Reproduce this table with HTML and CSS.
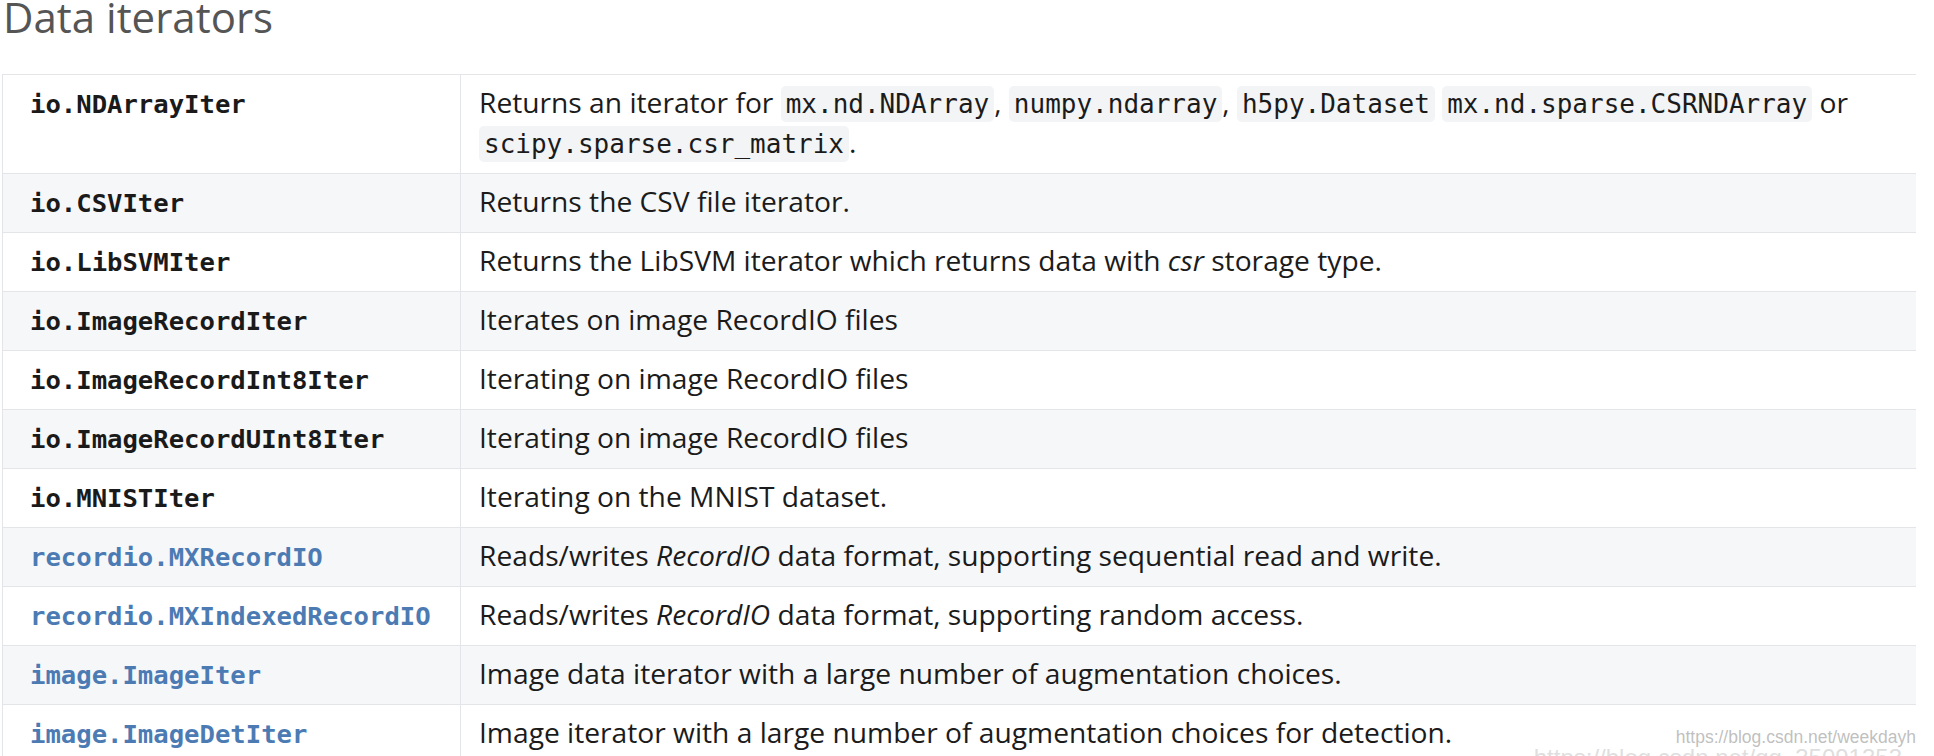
FILE: index.html
```html
<!DOCTYPE html>
<html lang="en">
<head>
<meta charset="utf-8">
<title>Data iterators</title>
<link rel="stylesheet" href="styles.css">
</head>
<body>
<main class="page">
  <h1 class="title">Data iterators</h1>
  <table class="summary">
    <colgroup><col class="col-name"><col class="col-desc"></colgroup>
    <tbody>
      <tr>
        <td class="name top"><code class="n">io.NDArrayIter</code></td>
        <td class="desc">Returns an iterator for <code class="c">mx.nd.NDArray</code>, <code class="c">numpy.ndarray</code>, <code class="c">h5py.Dataset</code> <code class="c">mx.nd.sparse.CSRNDArray</code> or <code class="c">scipy.sparse.csr_matrix</code>.</td>
      </tr>
      <tr>
        <td class="name"><code class="n">io.CSVIter</code></td>
        <td class="desc">Returns the CSV file iterator.</td>
      </tr>
      <tr>
        <td class="name"><code class="n">io.LibSVMIter</code></td>
        <td class="desc">Returns the LibSVM iterator which returns data with <em>csr</em> storage type.</td>
      </tr>
      <tr>
        <td class="name"><code class="n">io.ImageRecordIter</code></td>
        <td class="desc">Iterates on image RecordIO files</td>
      </tr>
      <tr>
        <td class="name"><code class="n">io.ImageRecordInt8Iter</code></td>
        <td class="desc">Iterating on image RecordIO files</td>
      </tr>
      <tr>
        <td class="name"><code class="n">io.ImageRecordUInt8Iter</code></td>
        <td class="desc">Iterating on image RecordIO files</td>
      </tr>
      <tr>
        <td class="name"><code class="n">io.MNISTIter</code></td>
        <td class="desc">Iterating on the MNIST dataset.</td>
      </tr>
      <tr>
        <td class="name"><a class="link" href="#"><code class="n">recordio.MXRecordIO</code></a></td>
        <td class="desc">Reads/writes <em>RecordIO</em> data format, supporting sequential read and write.</td>
      </tr>
      <tr>
        <td class="name"><a class="link" href="#"><code class="n">recordio.MXIndexedRecordIO</code></a></td>
        <td class="desc">Reads/writes <em>RecordIO</em> data format, supporting random access.</td>
      </tr>
      <tr>
        <td class="name"><a class="link" href="#"><code class="n">image.ImageIter</code></a></td>
        <td class="desc">Image data iterator with a large number of augmentation choices.</td>
      </tr>
      <tr>
        <td class="name"><a class="link" href="#"><code class="n">image.ImageDetIter</code></a></td>
        <td class="desc">Image iterator with a large number of augmentation choices for detection.</td>
      </tr>
    </tbody>
  </table>
</main>
<div class="watermark">
  <span class="wm1">https://blog.csdn.net/weekdayh</span>
  <span class="wm2">https://blog.csdn.net/qq_35091353</span>
</div>
</body>
</html>
```

FILE: styles.css
```css
html, body {
  margin: 0;
  padding: 0;
  background: #ffffff;
}
body {
  width: 1934px;
  height: 756px;
  overflow: hidden;
  position: relative;
}
.page {
  padding-left: 2px;
}
.title {
  margin: 0 0 40px 1px;
  font-family: "Open Sans", "Noto Sans", sans-serif;
  font-weight: 400;
  font-size: 42px;
  line-height: 34px;
  color: #555555;
}
.summary {
  border-collapse: collapse;
  table-layout: fixed;
  width: 1914px;
  font-family: "Open Sans", "Noto Sans", sans-serif;
  font-size: 28.2px;
  color: #1b1b1b;
}
.col-name { width: 458px; }
.summary tr:nth-child(2n) { background: #f6f7f9; }
.summary td {
  border: 1px solid #e3e5e8;
  padding: 7px 18px 11px;
  line-height: 40px;
  vertical-align: middle;
}
.summary td.name { padding-left: 27px; }
.summary td.top { vertical-align: top; }
.summary td.desc { border-right: none; }
.n {
  font-family: "DejaVu Sans Mono", monospace;
  font-weight: 700;
  font-size: 25.6px;
  line-height: 1;
  color: #1a1a1a;
}
.link { text-decoration: none; }
.link .n { color: #4c7bb4; }
.c {
  font-family: "DejaVu Sans Mono", monospace;
  font-weight: 400;
  font-size: 26px;
  line-height: 1;
  background: #f3f4f6;
  border-radius: 5px;
  padding: 3px 5px;
  color: #1b1b1b;
}
.desc em { font-style: italic; }
.watermark {
  position: absolute;
  right: 18px;
  bottom: -14px;
  display: flex;
  flex-direction: column;
  align-items: flex-end;
  font-family: "Liberation Sans", Arial, sans-serif;
  color: rgba(175, 175, 175, 0.8);
  pointer-events: none;
}
.wm1 { font-size: 17.5px; line-height: 18px; }
.wm2 { font-size: 24px; line-height: 24px; margin-right: 14px; color: rgba(200, 200, 200, 0.6); }
```
